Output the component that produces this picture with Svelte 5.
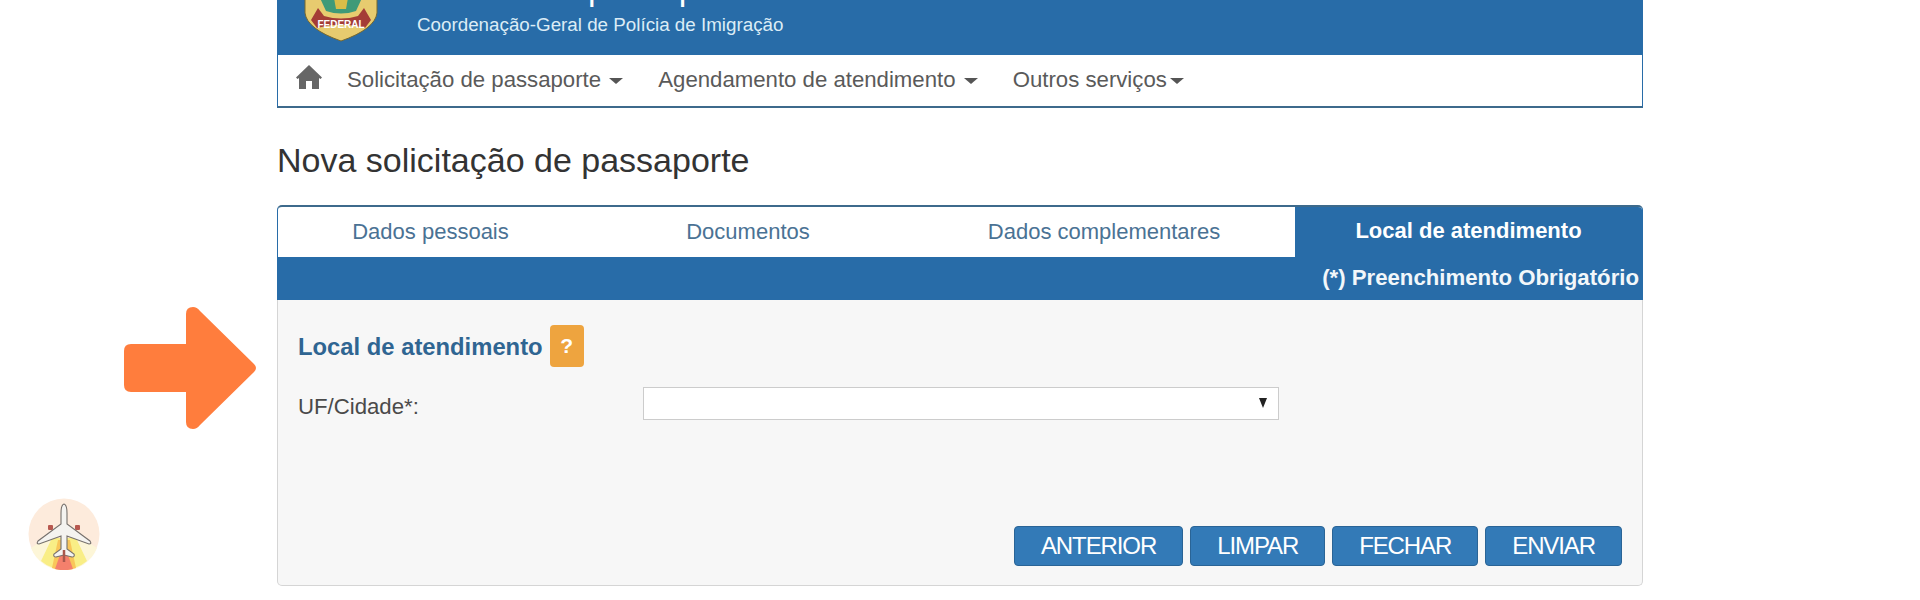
<script lang="ts">
  const steps = ['Dados pessoais', 'Documentos', 'Dados complementares'];
  const buttons = ['ANTERIOR', 'LIMPAR', 'FECHAR', 'ENVIAR'];
</script>

<div class="page">
  <svg class="arrow" width="136" height="126" viewBox="0 0 136 126" aria-hidden="true">
    <path d="M9 39H64V9Q64 2 71 2Q75 2 78 6L132 59Q136 63 132 67L78 120Q75 124 71 124Q64 124 64 117V87H9Q2 87 2 80V46Q2 39 9 39Z" fill="#ff7d3d" />
  </svg>

  <svg class="plane" width="72" height="72" viewBox="0 0 72 72" aria-hidden="true">
    <circle cx="36" cy="36" r="35.500" fill="#fdebdc" />
    <path d="M3 50L18 40H54L69 50A35.500 35.500 0 0 1 3 50Z" fill="#fdf6d8" />
    <path d="M13 63L24 40H48L59 63A35.500 35.500 0 0 1 13 63Z" fill="#f9ee86" />
    <path d="M24 70L30 42H42L48 70A35.500 35.500 0 0 1 24 70Z" fill="#f9c65a" />
    <path d="M27 71L33 54H39L45 71A35.500 35.500 0 0 1 27 71Z" fill="#f4806c" />
    <rect x="20" y="27" width="5" height="5" rx="1" fill="#b8584f" />
    <rect x="47" y="27" width="5" height="5" rx="1" fill="#b8584f" />
    <path d="M36 6Q39 7 39 15V26L62 43Q64 46 61 46L39 38V51L46 56Q47 59 44 59L36 57L28 59Q25 59 26 56L33 51V38L11 46Q8 46 10 43L33 26V15Q33 7 36 6Z" fill="#f4f3f0" stroke="#76716d" stroke-width="1.100" />
    <path d="M36 52V64" stroke="#a8574c" stroke-width="2.500" />
  </svg>

  <main class="shell">
    <header class="brand">
      <svg class="crest" width="74" height="42" viewBox="0 0 74 42" aria-hidden="true">
        <path d="M1 -2H73V13Q71 29 37 41Q3 29 1 13Z" fill="#e7cb6f" stroke="#76682f" />
        <path d="M16 -2H58L52 11Q37 16 22 11Z" fill="#3f9a78" />
        <path d="M30 -2H44L42 9H32Z" fill="#d9bd48" />
        <path d="M7 20L14 8L20 16Q37 21 54 16L60 8L67 20L61 28Q37 21 13 28Z" fill="#a43c36" />
        <text x="37" y="28" text-anchor="middle" class="crest-text">FEDERAL</text>
      </svg>
      <div class="brand-text">
        <p class="agency">Emissão de passaporte</p>
        <p class="dept">Coordenação-Geral de Polícia de Imigração</p>
      </div>
    </header>

    <nav class="nav">
      <svg class="home" width="28" height="26" viewBox="0 0 28 26" aria-hidden="true">
        <path d="M14 1L27 13.500L25.500 15L24 14V25H17V17H11V25H4V14L2.500 15L1 13.500Z" fill="#666" />
      </svg>
      <span class="nav-item">Solicitação de passaporte <i class="caret"></i></span>
      <span class="nav-item">Agendamento de atendimento <i class="caret"></i></span>
      <span class="nav-item">Outros serviços<i class="caret tight"></i></span>
    </nav>

    <h1>Nova solicitação de passaporte</h1>

    <section class="panel">
      <div class="tabs">
        {#each steps as step}
          <div class="tab">{step}</div>
        {/each}
        <div class="tab active">Local de atendimento</div>
      </div>
      <div class="required">(*) Preenchimento Obrigatório</div>
      <div class="body">
        <div class="section-title">
          <h2>Local de atendimento</h2>
          <span class="help">?</span>
        </div>
        <div class="field">
          <label for="uf">UF/Cidade*:</label>
          <div class="select" id="uf"><i class="select-caret"></i></div>
        </div>
        <div class="actions">
          {#each buttons as b}
            <button type="button">{b}</button>
          {/each}
        </div>
      </div>
    </section>
  </main>
</div>

<style>
  :global(body) {
    margin: 0;
    background: #fff;
    overflow: hidden;
  }

  .page {
    position: relative;
    height: 600px;
    overflow: hidden;
    font-family: "Liberation Sans", Arial, sans-serif;
    color: #333;
  }

  .arrow {
    position: absolute;
    left: 122px;
    top: 305px;
  }

  .plane {
    position: absolute;
    left: 28px;
    top: 498px;
  }

  .shell {
    width: 1366px;
    margin-left: 277px;
  }

  .brand {
    height: 55px;
    box-sizing: border-box;
    background: #286ca8;
    display: flex;
    padding-left: 27px;
    gap: 39px;
    color: #fff;
  }

  .crest-text {
    font: bold 10px "Liberation Sans", sans-serif;
    fill: #fff;
  }

  .brand-text {
    width: 700px;
  }

  .agency {
    margin: -32px 0 0;
    font-size: 34px;
    line-height: 40px;
    font-weight: normal;
    word-spacing: -8px;
    white-space: nowrap;
  }

  .dept {
    margin: 6px 0 0;
    font-size: 18.800px;
    line-height: 22px;
    color: #dcecf6;
    white-space: nowrap;
  }

  .nav {
    height: 53px;
    box-sizing: border-box;
    border: 1px solid #286ca8;
    border-top: 0;
    border-bottom: 2px solid #3d6a8c;
    display: flex;
    align-items: center;
    padding: 0 0 2px 17px;
    font-size: 22.200px;
    color: #5a5a5a;
  }

  .home {
    margin: -6px 24px 0 0;
  }

  .nav-item {
    margin-right: 35px;
    white-space: nowrap;
  }

  .caret {
    display: inline-block;
    vertical-align: middle;
    margin-left: 2px;
    border-top: 6px solid #555;
    border-left: 7px solid transparent;
    border-right: 7px solid transparent;
  }

  .tight {
    margin-left: 3px;
  }

  h1 {
    margin: 0;
    padding-top: 32px;
    height: 65px;
    font-size: 34px;
    line-height: 40px;
    font-weight: normal;
    color: #333;
  }

  .panel {
    height: 381px;
    box-sizing: border-box;
    border: 1px solid #d5d5d5;
    border-top: 0;
    border-radius: 5px;
    background: #f7f7f7;
    display: flex;
    flex-direction: column;
  }

  .tabs {
    display: grid;
    grid-template-columns: 305px 330px 382px 1fr;
    height: 53px;
    box-sizing: border-box;
    border: 1px solid #286ca8;
    border-top: 2px solid #3d6a8c;
    margin: 0 -1px;
    border-radius: 5px 5px 0 0;
    background: #fff;
    overflow: hidden;
  }

  .tab {
    display: flex;
    align-items: center;
    justify-content: center;
    font-size: 22px;
    color: #4a7294;
  }

  .active {
    background: #286ca8;
    color: #fff;
    font-weight: bold;
    padding-bottom: 2px;
  }

  .required {
    margin: 0 -1px;
    height: 42px;
    box-sizing: border-box;
    background: #286ca8;
    color: #f2f7fa;
    font-weight: bold;
    font-size: 22.200px;
    line-height: 40px;
    text-align: right;
    padding-right: 4px;
    white-space: nowrap;
  }

  .body {
    flex: 1;
    display: flex;
    flex-direction: column;
    padding: 25px 20px 19px;
  }

  .section-title {
    display: flex;
    align-items: center;
    gap: 7px;
  }

  h2 {
    margin: 0;
    padding-top: 1px;
    font-size: 23.800px;
    color: #2f6592;
  }

  .help {
    width: 34px;
    height: 42px;
    border-radius: 4px;
    background: #eea43f;
    color: #fff;
    font-weight: bold;
    font-size: 21px;
    display: flex;
    align-items: center;
    justify-content: center;
  }

  .field {
    margin-top: 19px;
    display: flex;
    align-items: center;
    font-size: 22.200px;
    color: #4a4a4a;
  }

  label {
    width: 345px;
    padding-top: 8px;
  }

  .select {
    width: 636px;
    height: 33px;
    box-sizing: border-box;
    border: 1px solid #ccc;
    background: #fff;
    display: flex;
    align-items: center;
    justify-content: flex-end;
    padding-right: 11px;
  }

  .select-caret {
    border-top: 10px solid #222;
    border-left: 4px solid transparent;
    border-right: 4px solid transparent;
  }

  .actions {
    margin-top: auto;
    display: flex;
    justify-content: flex-end;
    gap: 7px;
  }

  button {
    height: 40px;
    padding: 0 26px;
    border: 1px solid #2a6496;
    border-radius: 4px;
    background: #337ab7;
    color: #fff;
    font: 24px "Liberation Sans", Arial, sans-serif;
    letter-spacing: -1.100px;
  }
</style>
